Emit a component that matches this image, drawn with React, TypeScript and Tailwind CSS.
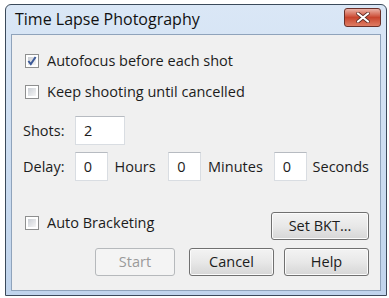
import React from 'react';

const font = { fontFamily: '"Open Sans", "Noto Sans", sans-serif' };

function CheckBox({ checked }: { checked?: boolean }) {
  return (
    <div className="w-[14px] h-[14px] border border-[#8e8f8f] bg-white p-[2px] shrink-0">
      <div className="w-full h-full bg-gradient-to-br from-[#cbcfd5] to-[#f6f6f6] relative">
        {checked && (
          <svg viewBox="0 0 12 12" className="absolute -left-[2px] -top-[2px] w-[12px] h-[12px]">
            <path d="M2.4 6 L4.8 9 L9.6 2" fill="none" stroke="#3d5a98" strokeWidth="2" />
          </svg>
        )}
      </div>
    </div>
  );
}

function Field({ value, w }: { value: string; w: string }) {
  return (
    <div className={`${w} h-[29px] bg-white border border-[#d9dde2] border-t-[#b7bbc1] flex items-center pl-[8px] text-[#1c1c1c]`}>
      {value}
    </div>
  );
}

function Btn({ label, w, disabled }: { label: string; w: string; disabled?: boolean }) {
  return (
    <div
      className={
        disabled
          ? `${w} h-[28px] rounded-[3px] border border-[#b6b9bc] bg-[#f4f4f4] flex items-center justify-center text-[#9a9a9a]`
          : `${w} h-[28px] rounded-[3px] border border-[#707070] bg-gradient-to-b from-[#f3f3f3] via-[#e8e8e8] to-[#d6d6d6] flex items-center justify-center text-[#1c1c1c] shadow-[inset_0_0_0_1px_#fbfbfb]`
      }
    >
      {label}
    </div>
  );
}

export default function App() {
  return (
    <div className="w-[389px] h-[298px] bg-white pt-[4px] pl-[5px]" style={font}>
      <div className="w-[382px] h-[292px] border border-[#3b4a5b] rounded-t-[6px] bg-gradient-to-b from-[#dae7f6] to-[#c0d4ec] flex flex-col overflow-hidden">
        <div className="h-[29px] flex items-start justify-between pl-[9px] pr-[5px] shrink-0">
          <span className="text-[16px] text-[#111] mt-[4px] leading-[20px]">Time Lapse Photography</span>
          <div className="mt-[3px] w-[37px] h-[19px] rounded-[3px] border border-[#6a3029] bg-gradient-to-b from-[#eab1a6] via-[#c8442d] to-[#de7c63] flex items-center justify-center">
            <svg viewBox="0 0 14 11" className="w-[14px] h-[11px]">
              <path d="M2 1.5 L12 9.5 M12 1.5 L2 9.5" stroke="#5a2a24" strokeWidth="3.6" strokeLinecap="round" />
              <path d="M2 1.5 L12 9.5 M12 1.5 L2 9.5" stroke="#ffffff" strokeWidth="2.2" strokeLinecap="round" />
            </svg>
          </div>
        </div>
        <div className="flex-1 mx-[5px] mb-[4px] bg-[#f0f0f0] border border-[#8fa3bb] pl-[11px] pr-[11px] text-[14.5px] text-[#1c1c1c] flex flex-col">
          <div className="h-[20px] mt-[16px] flex items-center gap-[8px] ml-[2px]">
            <CheckBox checked />
            <span>Autofocus before each shot</span>
          </div>
          <div className="h-[20px] mt-[11px] flex items-center gap-[8px] ml-[2px]">
            <CheckBox />
            <span>Keep shooting until cancelled</span>
          </div>
          <div className="mt-[14px] flex items-center">
            <span className="w-[52px]">Shots:</span>
            <Field value="2" w="w-[50px]" />
          </div>
          <div className="mt-[7px] flex items-center">
            <span className="w-[52px]">Delay:</span>
            <Field value="0" w="w-[33px]" />
            <span className="w-[61px] pl-[7px]">Hours</span>
            <Field value="0" w="w-[33px]" />
            <span className="w-[73px] pl-[7px]">Minutes</span>
            <Field value="0" w="w-[33px]" />
            <span className="pl-[6px]">Seconds</span>
          </div>
          <div className="mt-[31px] flex items-start justify-between">
            <div className="h-[20px] mt-[1px] flex items-center gap-[8px] ml-[2px]">
              <CheckBox />
              <span>Auto Bracketing</span>
            </div>
            <Btn label="Set BKT..." w="w-[98px]" />
          </div>
          <div className="mt-[8px] flex justify-end gap-[10px]">
            <div className="mr-[4px]">
              <Btn label="Start" w="w-[80px]" disabled />
            </div>
            <Btn label="Cancel" w="w-[85px]" />
            <Btn label="Help" w="w-[85px]" />
          </div>
        </div>
      </div>
    </div>
  );
}
